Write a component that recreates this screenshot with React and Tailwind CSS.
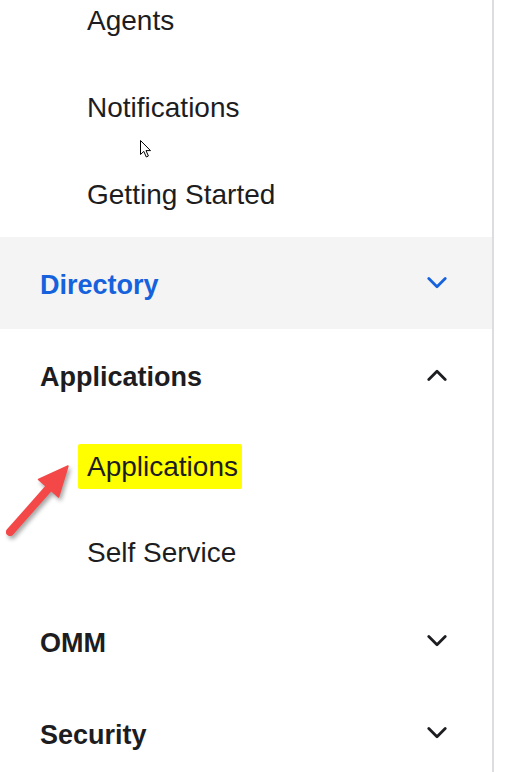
const Chevron = ({ up = false, color = '#1d1d21' }) => (
  <svg width="20" height="12" viewBox="0 0 20 12" fill="none">
    <path
      d={up ? 'M1.8 10.5 L10 2.3 L18.2 10.5' : 'M1.8 1.5 L10 9.7 L18.2 1.5'}
      stroke={color}
      strokeWidth="2.8"
      strokeLinecap="round"
      strokeLinejoin="round"
    />
  </svg>
)

const SubItem = ({ children }) => (
  <div className="h-[87px] flex items-center pl-[87px] pt-[2px] text-[28px] text-[#1d1d21]">{children}</div>
)

const Header = ({ label, open = false, active = false }) => (
  <div
    className={`h-[92px] flex items-center justify-between pl-10 pr-[45px] ${
      active ? 'bg-[#f4f4f4]' : 'bg-white'
    }`}
  >
    <span className={`pt-[5px] text-[27px] font-bold ${active ? 'text-[#1662dd]' : 'text-[#1d1d21]'}`}>{label}</span>
    <Chevron up={open} color={active ? '#1662dd' : '#1d1d21'} />
  </div>
)

export default function App() {
  return (
    <div className="h-[772px] overflow-hidden bg-white flex" style={{ fontFamily: '"Liberation Sans", Arial, sans-serif' }}>
      <div className="relative w-[494px] border-r-2 border-[#dcdce1]">
        <div className="-mt-6">
          <SubItem>Agents</SubItem>
          <SubItem>Notifications</SubItem>
          <SubItem>Getting Started</SubItem>
          <Header label="Directory" active />
          <Header label="Applications" open />
          <div className="h-[87px] flex items-center pl-[78px] pt-1 text-[28px] text-[#1d1d21]">
            <span className="bg-[#ffff00] pl-[9px] pr-1 py-[6px] leading-[33px] rounded-[2px]">Applications</span>
          </div>
          <SubItem>Self Service</SubItem>
          <Header label="OMM" />
          <Header label="Security" />
        </div>

        {/* red annotation arrow */}
        <svg
          className="absolute left-0 top-[455px] drop-shadow-[2px_3px_2px_rgba(0,0,0,0.35)]"
          width="80"
          height="90"
          viewBox="0 0 80 90"
        >
          <path d="M10 77 L48 34" stroke="#f44848" strokeWidth="8" strokeLinecap="round" />
          <path d="M68 11 L58.5 42 L38.5 24.5 Z" fill="#f44848" stroke="#f44848" strokeWidth="1.5" strokeLinejoin="round" />
        </svg>

        {/* mouse pointer */}
        <svg className="absolute left-[140px] top-[140px]" width="13" height="19" viewBox="0 0 13 19">
          <path
            d="M0.5 0.5 L0.5 14.5 L3.8 11.4 L6.3 17 L8.4 16 L6 10.6 L10.5 10.6 Z"
            fill="#fff"
            stroke="#000"
            strokeWidth="1"
            strokeLinejoin="round"
          />
        </svg>
      </div>
      <div className="flex-1 bg-white" />
    </div>
  )
}
